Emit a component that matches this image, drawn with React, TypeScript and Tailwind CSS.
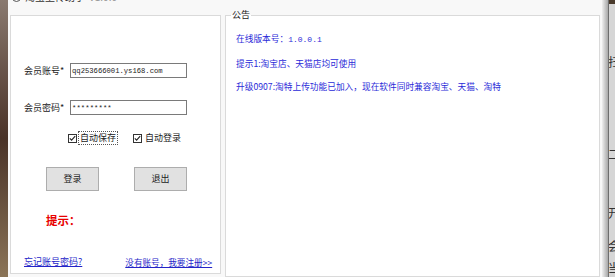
import React from "react";

function Check() {
  return (
    <span className="flex h-[9px] w-[9px] shrink-0 items-center justify-center border border-[#333] bg-white">
      <svg width="7" height="7" viewBox="0 0 7 7">
        <path d="M0.8 3.4 L2.6 5.2 L6.2 1.2" fill="none" stroke="#222" strokeWidth="1.1" />
      </svg>
    </span>
  );
}

export default function App() {
  return (
    <div className="flex h-[277px] w-[615px] overflow-hidden bg-[#d4d4d4] font-['Noto_Sans_CJK_SC',sans-serif] text-[#222]">
      {/* background left */}
      <div className="h-full w-[8px] shrink-0 bg-linear-to-b from-[#8a7a70] via-[#4a3328] to-[#8b7558]" />

      {/* window */}
      <div className="flex h-full w-[594px] shrink-0 flex-col bg-[#f8f8f8]">
        <div className="flex h-[5px] items-start overflow-hidden pl-[4px]">
          <div className="-mt-[9px] flex items-center gap-[4px]">
            <span className="h-[9px] w-[9px] rounded-full border border-[#555]" />
            <span className="text-[10px] leading-[12px] text-[#333]">淘宝上传助手</span>
            <span className="text-[10px] leading-[12px] text-[#999]">V1.0.0</span>
          </div>
        </div>

        <div className="flex items-start">
          {/* left box */}
          <div className="ml-[2px] mt-[11px] flex h-[259px] w-[211px] shrink-0 flex-col border border-[#dadada] bg-white text-[9px] leading-[12px]">
            <div className="ml-[13px] mt-[47px] flex h-[15px] items-center">
              <span className="w-[46px]">会员账号*</span>
              <div className="flex h-[15px] w-[117px] items-center border border-[#7a7a7a] bg-white pl-[1px] font-['Liberation_Mono',monospace] text-[7.2px]">
                qq253666001.ys168.com
              </div>
            </div>
            <div className="ml-[13px] mt-[22px] flex h-[15px] items-center">
              <span className="w-[46px]">会员密码*</span>
              <div className="flex h-[15px] w-[117px] items-center border border-[#7a7a7a] bg-white pl-[1px] font-['Liberation_Mono',monospace] text-[7.2px] tracking-[0.1px]">
                *********
              </div>
            </div>
            <div className="ml-[57px] mt-[16px] flex h-[14px] items-center">
              <Check />
              <span className="ml-[1px] border border-dotted border-[#555] px-[1px] leading-[12px]">自动保存</span>
              <span className="ml-[15px]"><Check /></span>
              <span className="ml-[3px]">自动登录</span>
            </div>
            <div className="ml-[35px] mt-[22px] flex gap-[35px]">
              <button className="flex h-[24px] w-[53px] items-center justify-center border border-[#adadad] bg-[#e1e1e1] text-[9px]">登录</button>
              <button className="flex h-[24px] w-[53px] items-center justify-center border border-[#adadad] bg-[#e1e1e1] text-[9px]">退出</button>
            </div>
            <div className="ml-[35px] mt-[22px] text-[11.5px] font-bold leading-[14px] text-[#e80000]">提示：</div>
            <div className="ml-[13px] mt-[29px] flex text-[9px] leading-[12px] text-[#2424c8]">
              <span className="underline">忘记账号密码?</span>
              <span className="ml-[43px] text-[8.6px] underline">没有账号，我要注册&gt;&gt;</span>
            </div>
          </div>

          {/* right box */}
          <fieldset className="ml-[4px] mt-[5px] h-[268px] w-[375px] shrink-0 border border-[#dadada] bg-white px-[10px]">
            <legend className="ml-[-5px] px-[1px] text-[9px] leading-[12px] text-[#222]">公告</legend>
            <div className="flex flex-col gap-[11.5px] pt-[12px] text-[8.7px] leading-[12px] text-[#2a2ad8]">
              <div>
                在线版本号：<span className="font-['Liberation_Mono',monospace] text-[8px]">1.0.0.1</span>
              </div>
              <div>提示1:淘宝店、天猫店均可使用</div>
              <div>升级0907:淘特上传功能已加入，现在软件同时兼容淘宝、天猫、淘特</div>
            </div>
          </fieldset>
        </div>
      </div>

      {/* window shadow */}
      <div className="h-full w-[6px] shrink-0 bg-linear-to-r from-[#efefef] to-[#a8a8a8]" />
      <div className="h-full w-[1px] shrink-0 bg-[#6e6e6e]" />
      {/* background right */}
      <div className="flex h-full w-[6px] shrink-0 flex-col overflow-hidden bg-[#d6d6d6] text-[12px] leading-[12px] text-[#333]">
        <div className="h-[4px] w-full shrink-0 bg-[#4a3a2c]" />
        <span className="mt-[52px] -ml-[1px] whitespace-nowrap">扫</span>
        <span className="mt-[80px] -ml-[1px] whitespace-nowrap">二</span>
        <span className="mt-[47px] -ml-[1px] whitespace-nowrap">开</span>
        <span className="mt-[21px] -ml-[1px] whitespace-nowrap">会</span>
        <span className="mt-[10px] -ml-[1px] whitespace-nowrap">当</span>
      </div>
    </div>
  );
}
